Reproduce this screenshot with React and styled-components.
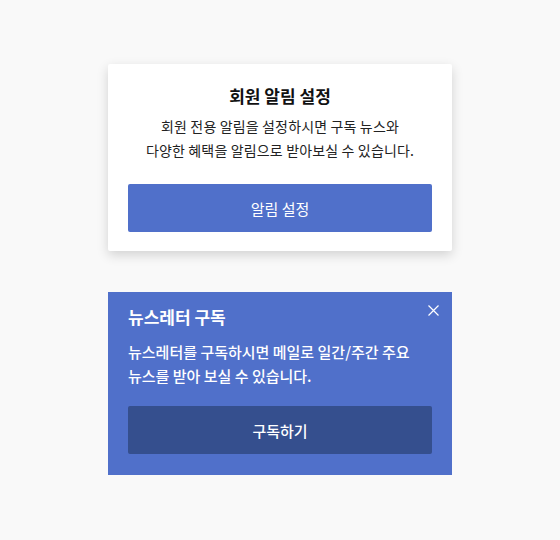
import React from "react";
import styled, { createGlobalStyle } from "styled-components";

const Global = createGlobalStyle`
  html, body { margin: 0; padding: 0; background: #f9f9f9; }
  body { font-family: "Noto Sans CJK KR", "Noto Sans", sans-serif; }
  * { box-sizing: border-box; }
`;

const Page = styled.div`
  display: flex;
  flex-direction: column;
  align-items: center;
  gap: 41px;
  padding-top: 64px;
`;

const Card = styled.section`
  position: relative;
  width: 344px;
  padding: ${(p) => (p.$variant === "blue" ? "13px 20px 21px" : "20px 20px 19px")};
  background: ${(p) => (p.$variant === "blue" ? "#5070ca" : "#ffffff")};
  color: ${(p) => (p.$variant === "blue" ? "#ffffff" : "#222222")};
  text-align: ${(p) => (p.$variant === "blue" ? "left" : "center")};
  border-radius: ${(p) => (p.$variant === "blue" ? "0" : "2px")};
  box-shadow: ${(p) => (p.$variant === "blue" ? "none" : "0 4px 12px rgba(0,0,0,0.16)")};
`;

const Title = styled.h2`
  margin: 0;
  font-size: 17px;
  line-height: 24px;
  font-weight: 700;
  color: ${(p) => (p.$light ? "#ffffff" : "#111111")};
`;

const Body = styled.p`
  margin: ${(p) => (p.$light ? "11px" : "6px")} 0 0;
  font-size: ${(p) => (p.$light ? "15px" : "14px")};
  letter-spacing: ${(p) => (p.$light ? "0" : "0.15px")};
  line-height: 24px;
  font-weight: ${(p) => (p.$light ? 500 : 400)};
  color: ${(p) => (p.$light ? "#ffffff" : "#222222")};
`;

const Button = styled.button`
  display: block;
  width: 100%;
  height: 48px;
  margin-top: ${(p) => (p.$dark ? "18px" : "22px")};
  border: none;
  border-radius: 2px;
  background: ${(p) => (p.$dark ? "#354f8e" : "#5070ca")};
  color: #ffffff;
  font-family: inherit;
  font-size: 15px;
  font-weight: ${(p) => (p.$dark ? 500 : 400)};
  cursor: pointer;
`;

const Close = styled.button`
  position: absolute;
  top: 11px;
  right: 12px;
  width: 14px;
  height: 14px;
  padding: 0;
  border: none;
  background: none;
  display: flex;
  align-items: center;
  justify-content: center;
  cursor: pointer;
`;

export default function App() {
  return (
    <>
      <Global />
      <Page>
        <Card>
          <Title>회원 알림 설정</Title>
          <Body>
            회원 전용 알림을 설정하시면 구독 뉴스와
            <br />
            다양한 혜택을 알림으로 받아보실 수 있습니다.
          </Body>
          <Button>알림 설정</Button>
        </Card>
        <Card $variant="blue">
          <Close aria-label="닫기">
            <svg width="11" height="11" viewBox="0 0 11 11">
              <path d="M0.5 0.5 L10.5 10.5 M10.5 0.5 L0.5 10.5" stroke="#fff" strokeWidth="1.2" />
            </svg>
          </Close>
          <Title $light>뉴스레터 구독</Title>
          <Body $light>
            뉴스레터를 구독하시면 메일로 일간/주간 주요
            <br />
            뉴스를 받아 보실 수 있습니다.
          </Body>
          <Button $dark>구독하기</Button>
        </Card>
      </Page>
    </>
  );
}
